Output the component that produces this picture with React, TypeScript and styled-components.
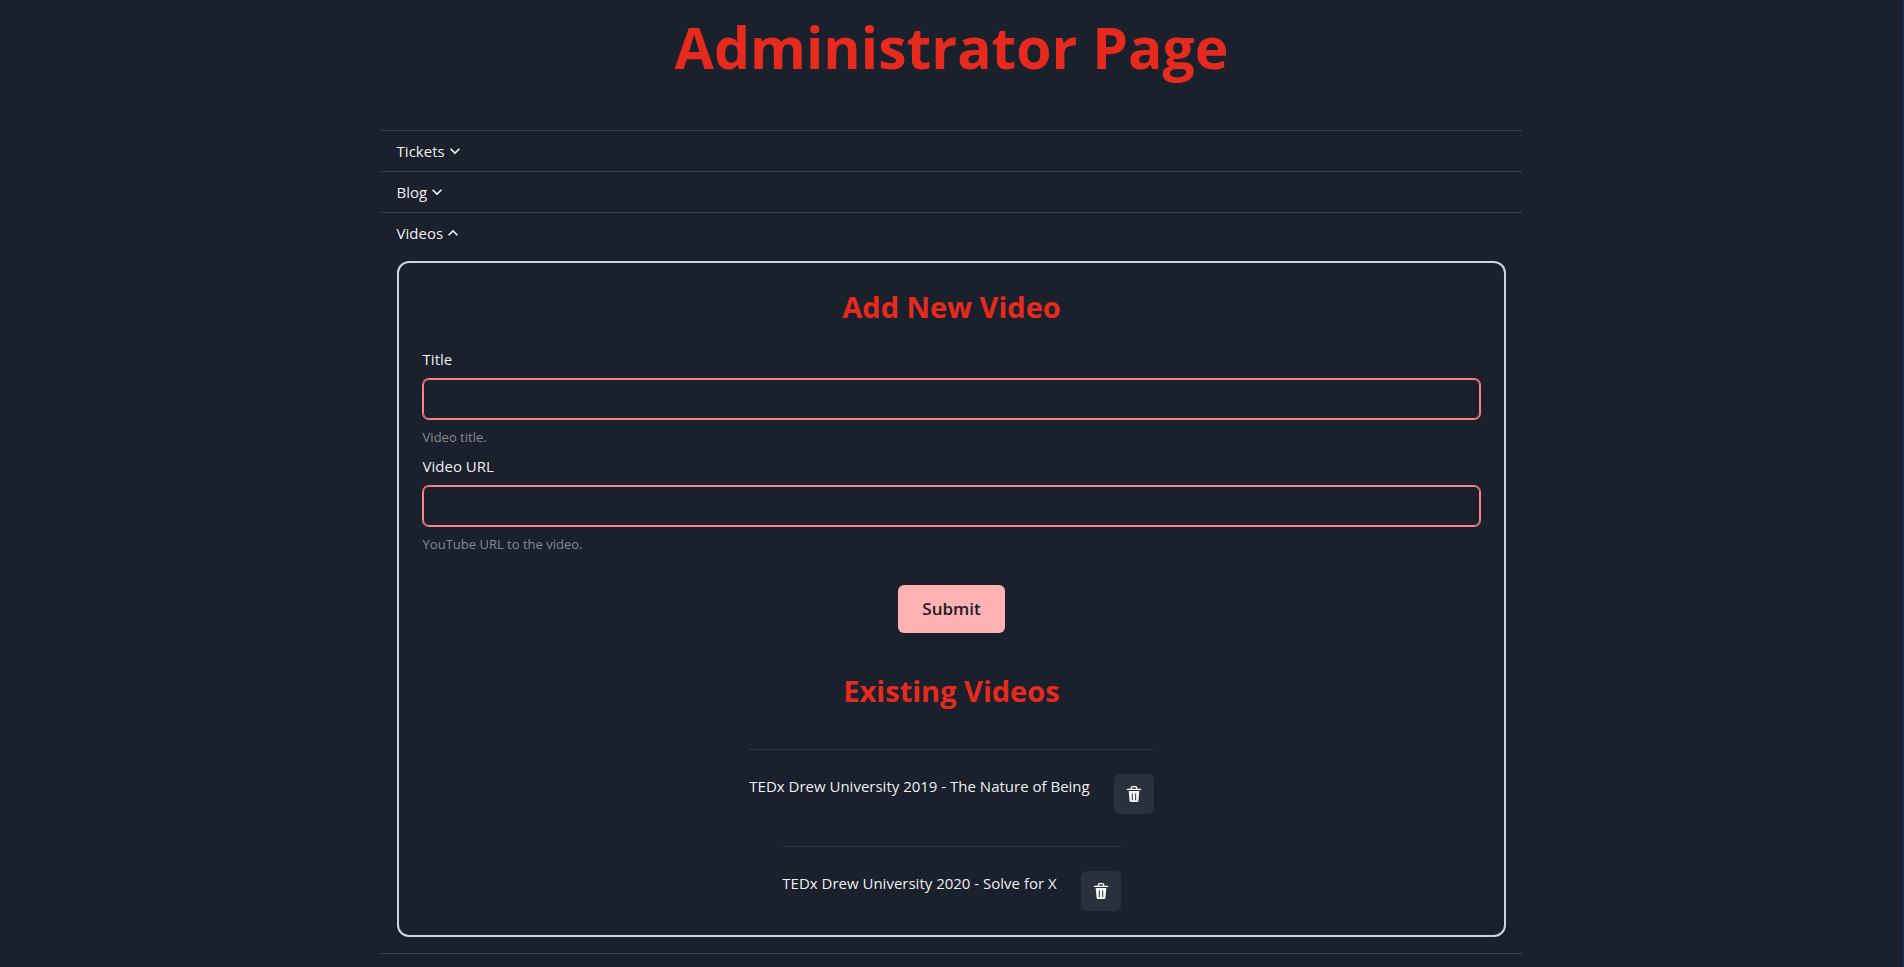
import React, { useState } from "react";
import styled, { createGlobalStyle } from "styled-components";

const GlobalStyle = createGlobalStyle`
  *, *::before, *::after { box-sizing: border-box; }
  body {
    margin: 0;
    background: #1a202c;
    color: rgba(255, 255, 255, 0.96);
    font-family: "Segoe UI", "Open Sans", "Noto Sans", sans-serif;
    font-size: 15px;
    line-height: 24px;
  }
  h1, h2, p, ul { margin: 0; padding: 0; }
  button, input { font: inherit; color: inherit; }
`;

const Page = styled.main`
  display: flex;
  flex-direction: column;
  align-items: center;
  gap: 36px;
  min-height: 100vh;
  border-right: 1px solid #0f3450;
`;

const PageTitle = styled.h1`
  color: #e62b1e;
  font-size: 57px;
  line-height: 94px;
  font-weight: 700;
  text-align: center;
`;

const Accordion = styled.div`
  width: 60%;
  border-bottom: 1px solid rgba(255, 255, 255, 0.16);
`;

const AccordionItem = styled.section`
  border-top: 1px solid rgba(255, 255, 255, 0.16);
`;

const AccordionButton = styled.button`
  display: flex;
  align-items: center;
  width: 100%;
  padding: 8px 16px;
  border: 0;
  background: none;
  text-align: left;
  cursor: pointer;
`;

const Chevron = styled.svg<{ $open: boolean }>`
  width: 20px;
  height: 20px;
  fill: currentColor;
  transform: ${(p) => (p.$open ? "rotate(180deg)" : "none")};
`;

const AccordionPanel = styled.div`
  padding: 8px 16px 16px;
`;

const Card = styled.div`
  display: flex;
  flex-direction: column;
  padding: 24px;
  border: 2px solid #cbd5e0;
  border-radius: 12px;
`;

const SectionTitle = styled.h2`
  color: #e62b1e;
  font-size: 29px;
  line-height: 40px;
  font-weight: 700;
  text-align: center;
`;

const Form = styled.form`
  display: flex;
  flex-direction: column;
  gap: 6px;
  padding: 20px 0 38px;
`;

const Field = styled.div`
  display: flex;
  flex-direction: column;
  gap: 8px;
`;

const Label = styled.label`
  align-self: flex-start;
`;

const TextInput = styled.input`
  width: 100%;
  height: 40px;
  padding: 0 16px;
  border: 1px solid #fc8181;
  border-radius: 6px;
  box-shadow: 0 0 0 1px #fc8181;
  background: none;
  outline: none;
`;

const HelperText = styled.p`
  color: rgba(255, 255, 255, 0.48);
  font-size: 13px;
  line-height: 21px;
`;

const SubmitButton = styled.button`
  align-self: center;
  height: 48px;
  margin-top: 24px;
  padding: 0 24px;
  border: 0;
  border-radius: 6px;
  background: #feb2b2;
  color: #1a202c;
  font-size: 17px;
  font-weight: 600;
  cursor: pointer;
`;

const VideoList = styled.ul`
  display: flex;
  flex-direction: column;
  align-items: center;
  gap: 32px;
  padding-top: 38px;
  list-style: none;
`;

const VideoRow = styled.li`
  display: flex;
  align-items: flex-start;
  gap: 24px;
  padding-top: 24px;
  border-top: 1px solid rgba(255, 255, 255, 0.1);
`;

const DeleteButton = styled.button`
  display: flex;
  align-items: center;
  justify-content: center;
  width: 40px;
  height: 40px;
  padding: 0;
  border: 0;
  border-radius: 6px;
  background: rgba(255, 255, 255, 0.08);
  cursor: pointer;
`;

const TrashIcon = () => (
  <svg width="16" height="16" viewBox="0 0 24 24" fill="currentColor" aria-hidden="true">
    <path d="M19.452 7.5H4.547a.5.5 0 00-.5.545l1.287 14.136A2 2 0 007.326 24h9.347a2 2 0 001.992-1.819L19.95 8.045a.5.5 0 00-.129-.382.5.5 0 00-.369-.163zm-9.2 13a.75.75 0 01-1.5 0v-9a.75.75 0 011.5 0zm5 0a.75.75 0 01-1.5 0v-9a.75.75 0 011.5 0zM22 4h-4.75a.25.25 0 01-.25-.25V2.5A2.5 2.5 0 0014.5 0h-5A2.5 2.5 0 007 2.5v1.25a.25.25 0 01-.25.25H2a1 1 0 000 2h20a1 1 0 000-2zM9 3.75V2.5a.5.5 0 01.5-.5h5a.5.5 0 01.5.5v1.25a.25.25 0 01-.25.25h-5.5A.25.25 0 019 3.75z" />
  </svg>
);

interface SectionProps {
  title: string;
  open: boolean;
  onToggle: () => void;
  children?: React.ReactNode;
}

const Section = ({ title, open, onToggle, children }: SectionProps) => (
  <AccordionItem>
    <AccordionButton type="button" aria-expanded={open} onClick={onToggle}>
      {title}
      <Chevron $open={open} viewBox="0 0 24 24" aria-hidden="true">
        <path d="M16.59 8.59L12 13.17 7.41 8.59 6 10l6 6 6-6z" />
      </Chevron>
    </AccordionButton>
    {open && children && <AccordionPanel>{children}</AccordionPanel>}
  </AccordionItem>
);

const initialVideos = [
  "TEDx Drew University 2019 - The Nature of Being",
  "TEDx Drew University 2020 - Solve for X",
];

const VideosPanel = () => {
  const [videos, setVideos] = useState(initialVideos);
  return (
    <Card>
      <SectionTitle>Add New Video</SectionTitle>
      <Form onSubmit={(e) => e.preventDefault()}>
        <Field>
          <Label htmlFor="title">Title</Label>
          <TextInput id="title" type="text" aria-invalid="true" aria-describedby="title-help" />
          <HelperText id="title-help">Video title.</HelperText>
        </Field>
        <Field>
          <Label htmlFor="url">Video URL</Label>
          <TextInput id="url" type="text" aria-invalid="true" aria-describedby="url-help" />
          <HelperText id="url-help">YouTube URL to the video.</HelperText>
        </Field>
        <SubmitButton type="submit">Submit</SubmitButton>
      </Form>
      <SectionTitle>Existing Videos</SectionTitle>
      <VideoList>
        {videos.map((video) => (
          <VideoRow key={video}>
            <p>{video}</p>
            <DeleteButton
              type="button"
              aria-label={`Delete ${video}`}
              onClick={() => setVideos(videos.filter((v) => v !== video))}
            >
              <TrashIcon />
            </DeleteButton>
          </VideoRow>
        ))}
      </VideoList>
    </Card>
  );
};

export default function App() {
  const [openSection, setOpenSection] = useState("Videos");
  const toggle = (name: string) => () => setOpenSection(openSection === name ? "" : name);
  return (
    <>
      <GlobalStyle />
      <Page>
        <PageTitle>Administrator Page</PageTitle>
        <Accordion>
          <Section title="Tickets" open={openSection === "Tickets"} onToggle={toggle("Tickets")} />
          <Section title="Blog" open={openSection === "Blog"} onToggle={toggle("Blog")} />
          <Section title="Videos" open={openSection === "Videos"} onToggle={toggle("Videos")}>
            <VideosPanel />
          </Section>
        </Accordion>
      </Page>
    </>
  );
}
